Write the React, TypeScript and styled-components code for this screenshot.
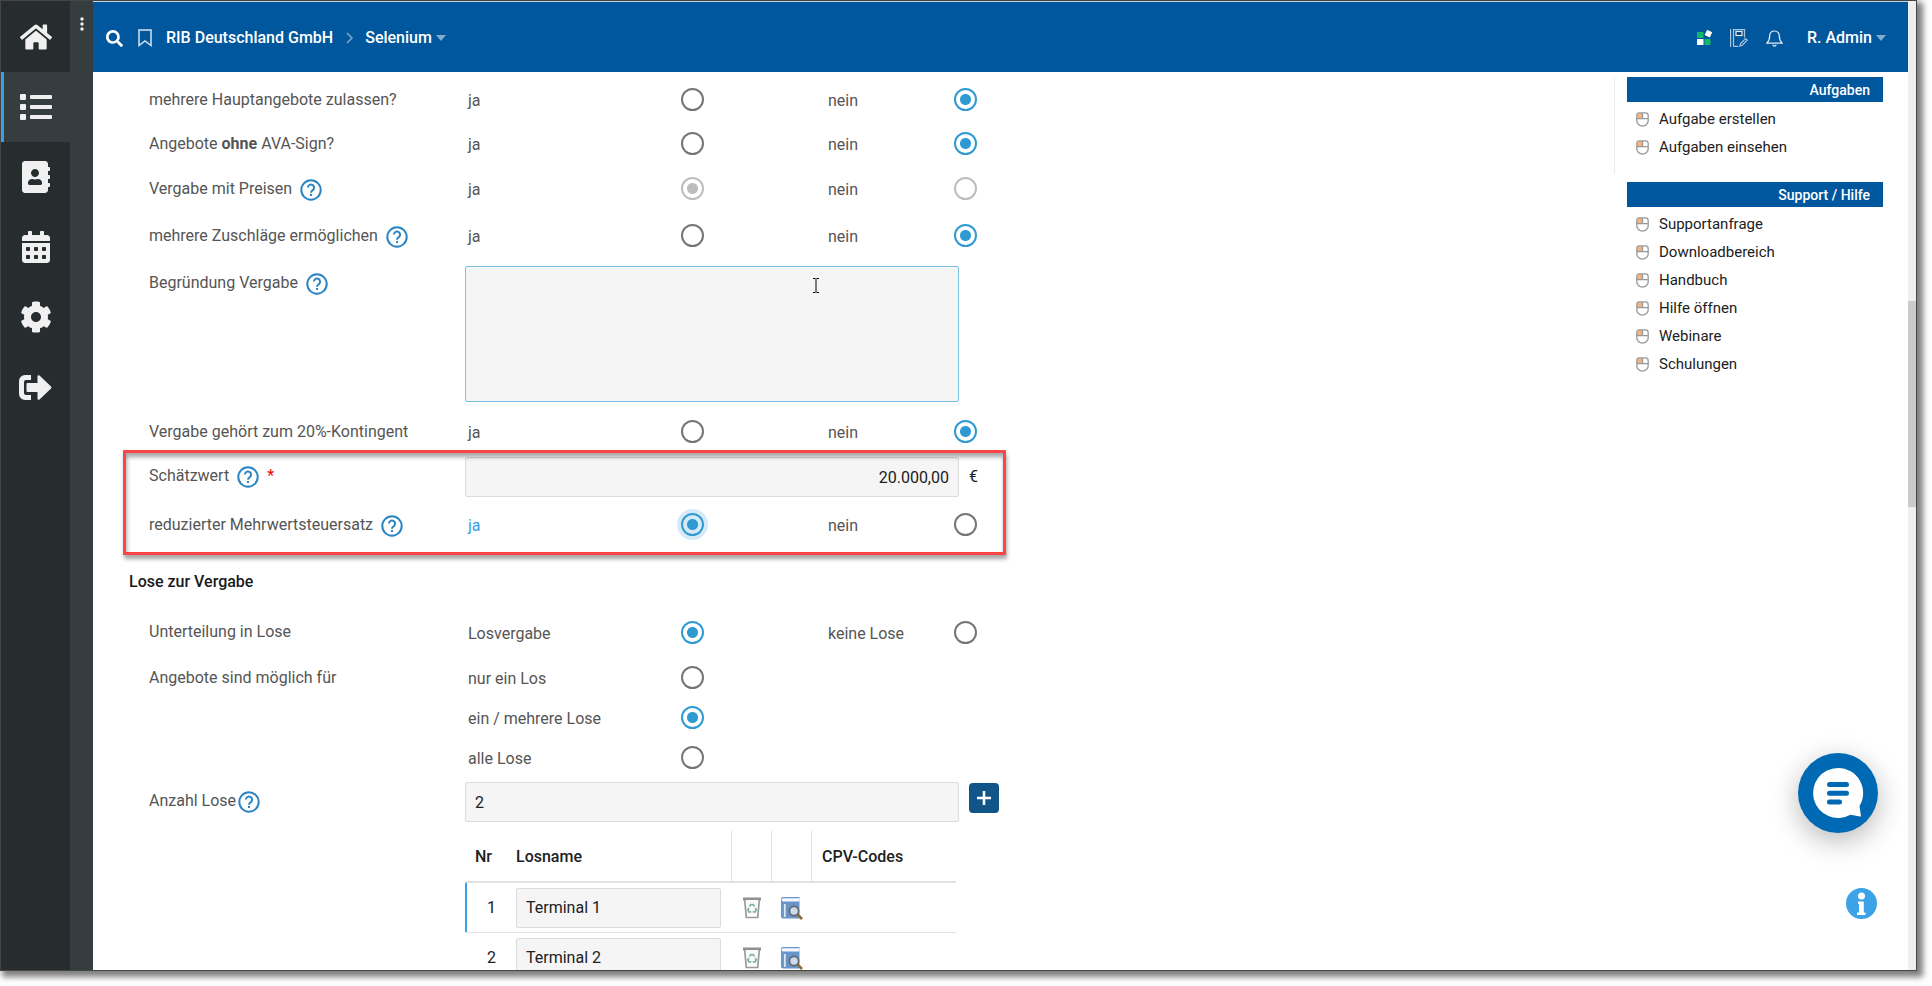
import React, { ReactNode } from "react";
import styled, { createGlobalStyle, css } from "styled-components";
import {
  FaHome,
  FaList,
  FaAddressBook,
  FaCalendarAlt,
  FaCog,
  FaSearch,
} from "react-icons/fa";

const GlobalStyle = createGlobalStyle`
  *, *::before, *::after { box-sizing: border-box; }
  html, body { margin: 0; height: 100%; background: #fff; overflow: hidden; }
  body { font-family: Roboto, "Liberation Sans", sans-serif; font-size: 16px; line-height: 20px; color: #212121; }
  button, input, textarea { font: inherit; color: inherit; }
  button { border: 0; padding: 0; background: none; cursor: pointer; }
  a { color: inherit; text-decoration: none; }
  h1, h2, p, ul { margin: 0; padding: 0; }
`;

const Frame = styled.div`
  height: 100vh;
  padding: 0 15px 15px 0;
`;

const Window = styled.div`
  position: relative;
  display: flex;
  height: 100%;
  overflow: hidden;
  background: #fff;
  border: 1px solid #454545;
`;

const Shadow = styled.div`
  height: 100%;
  box-shadow: 4px 4px 6px 2px rgba(0, 0, 0, 0.5);
`;

const Sidebar = styled.nav`
  width: 69px;
  flex: none;
  display: flex;
  flex-direction: column;
  padding-top: 1px;
  background: #272c2f;
`;

const NavButton = styled.button<{ $active?: boolean }>`
  height: 70px;
  display: flex;
  align-items: center;
  justify-content: center;
  color: #f0f0f0;
  ${(p) =>
    p.$active &&
    css`
      background: #363d41;
      box-shadow: inset 3px 0 0 #35a1e6;
    `}
`;

const Strip = styled.div`
  width: 23px;
  flex: none;
  display: flex;
  justify-content: center;
  align-items: flex-start;
  padding-top: 16px;
  background: #363d41;
`;

const Main = styled.div`
  flex: 1;
  min-width: 0;
  display: flex;
  flex-direction: column;
  border-top: 1px solid #c9d3dc;
`;

const Header = styled.header`
  height: 70px;
  flex: none;
  display: flex;
  align-items: center;
  padding: 2px 22px 0 13px;
  background: #00579d;
  color: #fff;
  font-weight: 500;
`;

const HeaderButton = styled.button<{ $left?: number }>`
  display: flex;
  align-items: center;
  margin-left: ${(p) => p.$left ?? 0}px;
  font-weight: 500;
`;

const Spacer = styled.div`
  flex: 1;
`;

const Caret = styled.span`
  margin-left: 4px;
  border: 5px solid transparent;
  border-top: 6px solid #7fabce;
  border-bottom: 0;
`;

const Body = styled.div`
  flex: 1;
  min-height: 0;
  display: flex;
  justify-content: space-between;
  padding-top: 5px;
  overflow: hidden;
`;

const Form = styled.form`
  flex: none;
  padding-left: 36px;
`;

const FieldRow = styled.div<{ $h?: number }>`
  display: grid;
  grid-template-columns: 316px auto;
  min-height: ${(p) => p.$h ?? 44}px;
  padding-left: 20px;
`;

const Label = styled.div<{ $top?: number; $gap?: number }>`
  display: flex;
  align-items: flex-start;
  gap: ${(p) => p.$gap ?? 8}px;
  padding-top: ${(p) => p.$top ?? 13}px;
  color: #555;
  white-space: pre;
`;

const HelpButton = styled.button`
  display: flex;
  color: #2a84c2;
`;

const Required = styled.span`
  color: #f00000;
`;

const Options = styled.div`
  display: grid;
  grid-template-columns: 360px 152px;
  align-items: center;
  padding-left: 3px;
`;

const OptionLabel = styled.label<{ $side: "left" | "right"; $focus?: boolean }>`
  display: flex;
  align-items: center;
  justify-content: space-between;
  height: 40px;
  width: ${(p) => (p.$side === "left" ? 236 : 149)}px;
  color: ${(p) => (p.$focus ? "#35a1e6" : "#555")};
`;

const OptionText = styled.span`
  padding-top: 3px;
`;

const Radio = styled.input<{ $focus?: boolean }>`
  appearance: none;
  width: 23px;
  height: 23px;
  margin: 0;
  border: 2px solid #757575;
  border-radius: 50%;
  background: #fff;
  &:checked {
    border-color: #2f9ad2;
    background: radial-gradient(circle, #2f9ad2 5px, #fff 6px);
  }
  &:disabled {
    border-color: #bdbdbd;
  }
  &:disabled:checked {
    background: radial-gradient(circle, #bdbdbd 5px, #fff 6px);
  }
  ${(p) =>
    p.$focus &&
    css`
      box-shadow: 0 0 0 4px #d5eaf6;
      &:checked {
        background: radial-gradient(circle, #2f9ad2 5px, #d5eaf6 6px);
      }
    `}
`;

const OptionStack = styled.div`
  padding: 2px 0 0 3px;
`;

const InputCell = styled.div<{ $top: number; $bottom: number }>`
  display: flex;
  align-items: flex-start;
  padding: ${(p) => p.$top}px 0 ${(p) => p.$bottom}px;
`;

const fieldStyle = css`
  border: 1px solid #dcdcdc;
  border-radius: 2px;
  background: #f5f5f5;
  outline: none;
  color: #212121;
`;

const TextInput = styled.input<{ $right?: boolean }>`
  ${fieldStyle}
  width: 494px;
  height: 40px;
  padding: 0 9px;
  text-align: ${(p) => (p.$right ? "right" : "left")};
`;

const Reason = styled.textarea`
  ${fieldStyle}
  display: block;
  width: 494px;
  height: 136px;
  border-color: #7dc1e6;
  resize: none;
`;

const ReasonBox = styled.div`
  position: relative;
  padding: 7px 0;
`;

const TextCursor = styled.svg`
  position: absolute;
  left: 347px;
  top: 18px;
`;

const Unit = styled.span`
  padding: 10px 0 0 10px;
`;

const AddButton = styled.button`
  display: flex;
  align-items: center;
  justify-content: center;
  width: 30px;
  height: 30px;
  margin: 1px 0 0 10px;
  border-radius: 4px;
  background: #115488;
`;

const Highlighted = styled.div`
  position: relative;
`;

const HighlightBox = styled.div`
  position: absolute;
  inset: -3px auto -8px -6px;
  width: 883px;
  border: 3px solid #fe4545;
  box-shadow: 1px 4px 4px rgba(0, 0, 0, 0.35), inset 1px 4px 4px rgba(0, 0, 0, 0.35);
  pointer-events: none;
`;

const SectionTitle = styled.h2`
  padding: 25px 0 17px;
  font-size: 16px;
  line-height: 20px;
  font-weight: 500;
  color: #1a1a1a;
`;

const LotTable = styled.table`
  width: 491px;
  margin: 9px 0 0 336px;
  border-collapse: separate;
  border-spacing: 0;
  table-layout: fixed;
`;

const Th = styled.th<{ $w?: number; $line?: boolean; $pad?: number }>`
  width: ${(p) => (p.$w ? `${p.$w}px` : "auto")};
  height: 52px;
  padding: 1px 0 0 ${(p) => p.$pad ?? 0}px;
  border-bottom: 2px solid #e2e2e2;
  ${(p) => p.$line && "border-left: 1px solid #e2e2e2;"}
  text-align: left;
  font-weight: 500;
`;

const Td = styled.td<{ $mark?: boolean; $number?: boolean }>`
  height: 50px;
  padding: 0;
  border-bottom: 1px solid #e2e2e2;
  vertical-align: middle;
  ${(p) => p.$number && "padding-left: 22px;"}
  ${(p) => p.$mark && "box-shadow: inset 2px 0 0 #35a1e6;"}
`;

const LotInput = styled(TextInput)`
  display: block;
  width: 205px;
`;

const IconButton = styled.button`
  display: flex;
  width: 41px;
  justify-content: center;
`;

const Aside = styled.aside`
  flex: none;
  width: 269px;
  margin-right: 25px;
`;

const Panel = styled.section<{ $line?: boolean }>`
  padding: 0 0 13px 12px;
  border-left: 1px solid ${(p) => (p.$line ? "#ececec" : "transparent")};
  margin-bottom: ${(p) => (p.$line ? 8 : 0)}px;
`;

const PanelTitle = styled.h2`
  height: 25px;
  margin-bottom: 3px;
  padding-right: 13px;
  background: #00579d;
  color: #fff;
  font-size: 14px;
  line-height: 26px;
  font-weight: 500;
  text-align: right;
`;

const PanelLink = styled.a`
  display: flex;
  align-items: center;
  gap: 10px;
  height: 28px;
  padding-left: 9px;
  font-size: 15px;
`;

const Track = styled.div`
  width: 8px;
  flex: none;
  background: #efefef;
`;

const Thumb = styled.div`
  height: 206px;
  margin-top: 300px;
  background: #cacaca;
`;

const ChatButton = styled.button`
  position: absolute;
  right: 38px;
  bottom: 137px;
  width: 80px;
  height: 80px;
  border-radius: 50%;
  background: #0069b4;
  box-shadow: 0 8px 28px rgba(0, 0, 0, 0.28);
`;

const InfoButton = styled.button`
  position: absolute;
  right: 39px;
  bottom: 51px;
  width: 31px;
  height: 31px;
`;

const Help = () => (
  <HelpButton type="button" aria-label="Hilfe">
    <svg width="22" height="22" viewBox="0 0 22 22">
      <circle cx="11" cy="11" r="9.7" fill="none" stroke="currentColor" strokeWidth="2" />
      <path d="M7.9 8.6a3.1 3.1 0 1 1 5 2.500c-1.200.9-1.900 1.300-1.900 2.700" fill="none" stroke="currentColor" strokeWidth="2" />
      <rect x="10" y="15" width="2" height="2" fill="currentColor" />
    </svg>
  </HelpButton>
);

const Logout = () => (
  <svg width="33" height="25" viewBox="0 0 33 25" fill="#f0f0f0">
    <path d="M12 0v5H7a2 2 0 0 0-2 2v11a2 2 0 0 0 2 2h5v5H6a6 6 0 0 1-6-6V6a6 6 0 0 1 6-6z" />
    <path d="M8.500 8h10V1.500a1.200 1.200 0 0 1 2-1l11.500 11a1.400 1.400 0 0 1 0 2l-11.500 11a1.200 1.200 0 0 1-2-1V17h-10a1 1 0 0 1-1-1V9a1 1 0 0 1 1-1z" />
  </svg>
);

const Mouse = () => (
  <svg width="13" height="15" viewBox="0 0 13 15">
    <path d="M3.500 1H6v5H1V3.500z" fill="#fbb27a" />
    <path d="M3.500.8h6a2.700 2.700 0 0 1 2.700 2.700v5.200a5.700 5.500 0 0 1-11.400 0V3.500A2.700 2.700 0 0 1 3.500.8zM1 6.700h11M6.500 1v5.700" fill="none" stroke="#999" strokeWidth="1.300" />
  </svg>
);

const Trash = () => (
  <svg width="20" height="22" viewBox="0 0 20 22">
    <path d="M1 2h18" stroke="#8f8f8f" strokeWidth="3" />
    <path d="M2.700 3l1.600 17.500h11.400L17.300 3" fill="#fbfbfb" stroke="#9a9a9a" strokeWidth="1.700" />
    <path d="M7.500 9.500l1.300-1.800h2.500l1.300 1.800M13.300 11l.9 1.800-1 2h-2.500M9.300 14.800H6.800l-.9-1.900L7 11" fill="none" stroke="#7fb8a0" strokeWidth="1.800" />
  </svg>
);

const BookSearch = () => (
  <svg width="23" height="24" viewBox="0 0 23 24">
    <path d="M1 3a2 2 0 0 1 2-2h16.500v21.500H3a2 2 0 0 1-2-2z" fill="#6795c9" />
    <path d="M3.200 2.200H19.500v3.300H3.200a1.600 1.600 0 0 1 0-3.300z" fill="#f4f8fc" />
    <path d="M4.800 8v13" stroke="#dfe9f4" strokeWidth="1.800" />
    <path d="M17.500 18.500l4.500 4.500" stroke="#8a6a3f" strokeWidth="2.600" />
    <circle cx="14" cy="15" r="4.600" fill="#c8dcec" stroke="#666" strokeWidth="1.700" />
  </svg>
);

interface Choice {
  text: string;
  checked?: boolean;
  focus?: boolean;
}

const Option = ({ text, checked, focus, name, side, disabled }: Choice & { name: string; side: "left" | "right"; disabled?: boolean }) => (
  <OptionLabel $side={side} $focus={focus}>
    <OptionText>{text}</OptionText>
    <Radio type="radio" name={name} defaultChecked={checked} disabled={disabled} $focus={focus} />
  </OptionLabel>
);

const RadioRow = ({
  label,
  help,
  name,
  h,
  left,
  right,
  disabled,
}: {
  label: ReactNode;
  help?: boolean;
  name: string;
  h?: number;
  left: Choice;
  right: Choice;
  disabled?: boolean;
}) => (
  <FieldRow $h={h} role="radiogroup">
    <Label $top={help ? 14 : 13}>
      <span>{label}</span>
      {help && <Help />}
    </Label>
    <Options>
      <Option {...left} name={name} side="left" disabled={disabled} />
      <Option {...right} name={name} side="right" disabled={disabled} />
    </Options>
  </FieldRow>
);

const LOTS = ["Terminal 1", "Terminal 2"];
const TASK_LINKS = ["Aufgabe erstellen", "Aufgaben einsehen"];
const SUPPORT_LINKS = ["Supportanfrage", "Downloadbereich", "Handbuch", "Hilfe öffnen", "Webinare", "Schulungen"];

const SidePanel = ({ title, links, line }: { title: string; links: string[]; line?: boolean }) => (
  <Panel $line={line}>
    <PanelTitle>{title}</PanelTitle>
    {links.map((link) => (
      <PanelLink href="#" key={link}>
        <Mouse />
        {link}
      </PanelLink>
    ))}
  </Panel>
);

export default function App() {
  return (
    <Frame>
      <GlobalStyle />
      <Shadow>
        <Window>
          <Sidebar>
            <NavButton aria-label="Start"><FaHome size={32} /></NavButton>
            <NavButton aria-label="Liste" $active><FaList size={32} /></NavButton>
            <NavButton aria-label="Adressbuch"><FaAddressBook size={32} /></NavButton>
            <NavButton aria-label="Kalender"><FaCalendarAlt size={32} /></NavButton>
            <NavButton aria-label="Einstellungen"><FaCog size={32} /></NavButton>
            <NavButton aria-label="Abmelden"><Logout /></NavButton>
          </Sidebar>
          <Strip>
            <svg width="4" height="14" viewBox="0 0 4 14" fill="#f0f0f0">
              <circle cx="2" cy="2" r="1.700" />
              <circle cx="2" cy="7" r="1.700" />
              <circle cx="2" cy="12" r="1.700" />
            </svg>
          </Strip>
          <Main>
            <Header>
              <HeaderButton aria-label="Suche"><FaSearch size={17} /></HeaderButton>
              <HeaderButton $left={15} aria-label="Lesezeichen">
                <svg width="14" height="18" viewBox="0 0 14 18">
                  <path d="M1 1h12v15.500l-6-4.500-6 4.500z" fill="none" stroke="#d5e3ef" strokeWidth="1.500" />
                </svg>
              </HeaderButton>
              <HeaderButton $left={14}>RIB Deutschland GmbH</HeaderButton>
              <HeaderButton as="span" $left={13}>
                <svg width="7" height="12" viewBox="0 0 7 12">
                  <path d="M1 1l5 5-5 5" fill="none" stroke="#7fabce" strokeWidth="1.500" />
                </svg>
              </HeaderButton>
              <HeaderButton $left={12}>Selenium<Caret /></HeaderButton>
              <Spacer />
              <HeaderButton aria-label="Apps">
                <svg width="16" height="16" viewBox="0 0 16 16">
                  <rect x="0" y="2" width="6.500" height="6" fill="#12b76a" />
                  <rect x="8.500" y="0.800" width="5.800" height="5.800" rx=".6" fill="#fff" transform="rotate(25 11.400 3.700)" />
                  <rect x="0" y="9" width="6.500" height="6" fill="#fff" />
                  <rect x="7.500" y="9" width="6" height="6" fill="#12b76a" />
                </svg>
              </HeaderButton>
              <HeaderButton $left={17} aria-label="Notizbuch">
                <svg width="18" height="18" viewBox="0 0 18 18" fill="none" stroke="#a9c6df" strokeWidth="1.200">
                  <path d="M.6 0v18M3.500 17.400V.6h11v8M3.500 17.400h5" />
                  <rect x="6" y="2.500" width="6" height="4" stroke="#e8f0f7" fill="#0a3a68" />
                  <path d="M10 17l.6-2.500 5-5 1.700 1.700-5 5z" />
                </svg>
              </HeaderButton>
              <HeaderButton $left={18} aria-label="Benachrichtigungen">
                <svg width="17" height="17" viewBox="0 0 17 17" fill="none" stroke="#e8f0f7" strokeWidth="1.200">
                  <path d="M8.500 1C5.500 1 3.700 3.200 3.700 6c0 4-1.200 5.500-2.900 7.200h15.400C14.500 11.500 13.300 10 13.300 6c0-2.800-1.800-5-4.800-5zM6.800 14.600c.5 1.900 2.900 1.900 3.400 0" />
                </svg>
              </HeaderButton>
              <HeaderButton $left={24}>R. Admin<Caret /></HeaderButton>
            </Header>
            <Body>
              <Form>
                <RadioRow label="mehrere Hauptangebote zulassen?" name="haupt" left={{ text: "ja" }} right={{ text: "nein", checked: true }} />
                <RadioRow label={<>Angebote <b>ohne</b> AVA-Sign?</>} name="ava" left={{ text: "ja" }} right={{ text: "nein", checked: true }} />
                <RadioRow label="Vergabe mit Preisen" help h={47} name="preise" disabled left={{ text: "ja", checked: true }} right={{ text: "nein" }} />
                <RadioRow label="mehrere Zuschläge ermöglichen" help h={47} name="zuschlag" left={{ text: "ja" }} right={{ text: "nein", checked: true }} />
                <FieldRow>
                  <Label $top={14}><label htmlFor="reason">Begründung Vergabe</label><Help /></Label>
                  <ReasonBox>
                    <Reason id="reason" />
                    <TextCursor width="8" height="17" viewBox="0 0 8 17">
                      <path d="M1 1.500h2.500M4.500 1.500H7M4 2v13M1 15.500h2.500M4.500 15.500H7" stroke="#000" />
                    </TextCursor>
                  </ReasonBox>
                </FieldRow>
                <RadioRow label="Vergabe gehört zum 20%-Kontingent" name="kontingent" left={{ text: "ja" }} right={{ text: "nein", checked: true }} />
                <Highlighted>
                  <FieldRow>
                    <Label>
                      <label htmlFor="value">Schätzwert</label>
                      <Help />
                      <Required>*</Required>
                    </Label>
                    <InputCell $top={4} $bottom={4}>
                      <TextInput id="value" $right defaultValue="20.000,00" />
                      <Unit>€</Unit>
                    </InputCell>
                  </FieldRow>
                  <RadioRow label="reduzierter Mehrwertsteuersatz" help h={46} name="mwst" left={{ text: "ja", checked: true, focus: true }} right={{ text: "nein" }} />
                  <HighlightBox />
                </Highlighted>
                <SectionTitle>Lose zur Vergabe</SectionTitle>
                <RadioRow label="Unterteilung in Lose" h={46} name="lose" left={{ text: "Losvergabe", checked: true }} right={{ text: "keine Lose" }} />
                <FieldRow role="radiogroup">
                  <Label>Angebote sind möglich für</Label>
                  <OptionStack>
                    <Option side="left" name="angebote" text="nur ein Los" />
                    <Option side="left" name="angebote" text="ein / mehrere Lose" checked />
                    <Option side="left" name="angebote" text="alle Lose" />
                  </OptionStack>
                </FieldRow>
                <FieldRow>
                  <Label $top={14} $gap={2}><label htmlFor="count">Anzahl Lose</label><Help /></Label>
                  <InputCell $top={5} $bottom={0}>
                    <TextInput id="count" defaultValue="2" />
                    <AddButton type="button" aria-label="Los hinzufügen">
                      <svg width="14" height="14" viewBox="0 0 14 14">
                        <path d="M7 0v14M0 7h14" stroke="#fff" strokeWidth="2.600" />
                      </svg>
                    </AddButton>
                  </InputCell>
                </FieldRow>
                <LotTable>
                  <thead>
                    <tr>
                      <Th $w={51} $pad={10}>Nr</Th>
                      <Th $w={215}>Losname</Th>
                      <Th $w={40} $line aria-label="Löschen" />
                      <Th $w={40} $line aria-label="Suchen" />
                      <Th $line $pad={10}>CPV-Codes</Th>
                    </tr>
                  </thead>
                  <tbody>
                    {LOTS.map((lot, i) => (
                      <tr key={lot}>
                        <Td $number $mark={i === 0}>{i + 1}</Td>
                        <Td><LotInput aria-label="Losname" defaultValue={lot} /></Td>
                        <Td><IconButton type="button" aria-label="Löschen"><Trash /></IconButton></Td>
                        <Td><IconButton type="button" aria-label="Suchen"><BookSearch /></IconButton></Td>
                        <Td />
                      </tr>
                    ))}
                  </tbody>
                </LotTable>
              </Form>
              <Aside>
                <SidePanel title="Aufgaben" links={TASK_LINKS} line />
                <SidePanel title="Support / Hilfe" links={SUPPORT_LINKS} />
              </Aside>
            </Body>
          </Main>
          <Track><Thumb /></Track>
          <ChatButton aria-label="Chat">
            <svg width="80" height="80" viewBox="0 0 80 80">
              <path d="M40 15a25 25 0 1 0 12.500 46.700l9.500 1.800a.8.800 0 0 0 .9-1l-1.400-9.500A25 25 0 0 0 40 15z" fill="#fff" />
              <path d="M31.500 31.500h17M31.500 40.200h17M31.500 49h10" stroke="#0069b4" strokeWidth="5" strokeLinecap="round" />
            </svg>
          </ChatButton>
          <InfoButton aria-label="Info">
            <svg width="31" height="31" viewBox="0 0 31 31">
              <circle cx="15.500" cy="15.500" r="15.500" fill="#3ba3e6" />
              <circle cx="15.500" cy="8" r="3.500" fill="#fff" />
              <path d="M12 13.500h5.800v11h1.700v2.500h-8.500v-2.500h2v-8.500H12z" fill="#fff" />
            </svg>
          </InfoButton>
        </Window>
      </Shadow>
    </Frame>
  );
}
